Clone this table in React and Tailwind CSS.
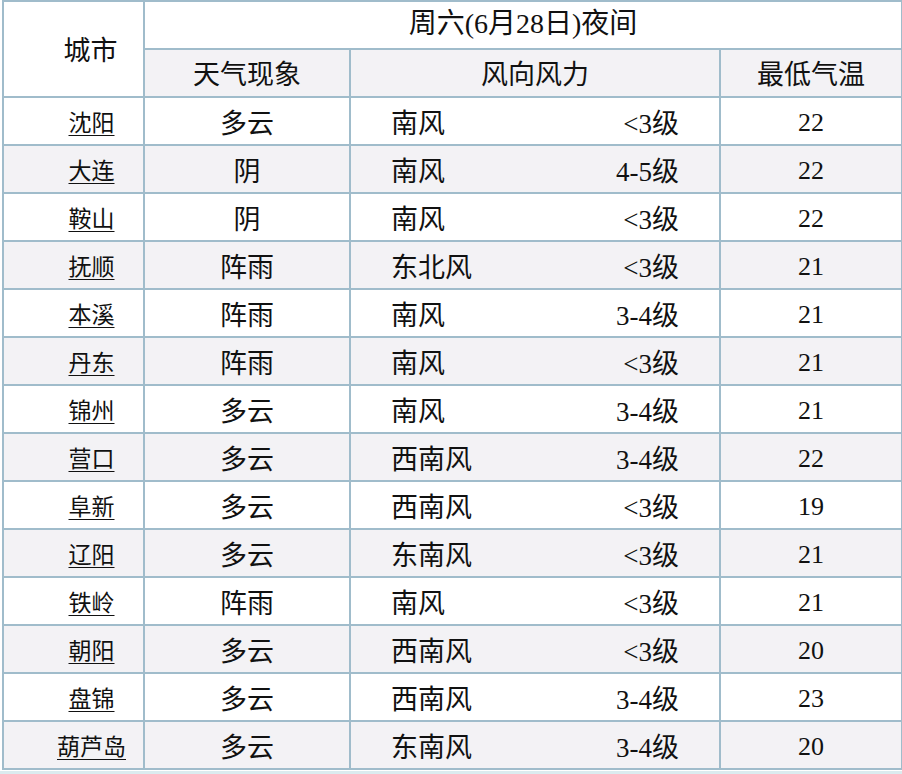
export default function App() {
  const rows = [
    ["沈阳", "多云", "南风", "<3级", "22"],
    ["大连", "阴", "南风", "4-5级", "22"],
    ["鞍山", "阴", "南风", "<3级", "22"],
    ["抚顺", "阵雨", "东北风", "<3级", "21"],
    ["本溪", "阵雨", "南风", "3-4级", "21"],
    ["丹东", "阵雨", "南风", "<3级", "21"],
    ["锦州", "多云", "南风", "3-4级", "21"],
    ["营口", "多云", "西南风", "3-4级", "22"],
    ["阜新", "多云", "西南风", "<3级", "19"],
    ["辽阳", "多云", "东南风", "<3级", "21"],
    ["铁岭", "阵雨", "南风", "<3级", "21"],
    ["朝阳", "多云", "西南风", "<3级", "20"],
    ["盘锦", "多云", "西南风", "3-4级", "23"],
    ["葫芦岛", "多云", "东南风", "3-4级", "20"],
  ];
  const font = { fontFamily: '"Liberation Serif", "Noto Sans CJK SC", serif' };
  const bd = "border-2 border-[#a0bccb]";
  return (
    <div className="w-[902px] h-[774px] bg-white text-[#111]" style={font}>
      <table className="table-fixed border-collapse ml-[2px] w-[899px] text-[27px] leading-none">
        <colgroup>
          <col className="w-[141px]" />
          <col className="w-[206px]" />
          <col className="w-[370px]" />
          <col className="w-[182px]" />
        </colgroup>
        <thead>
          <tr className="h-[48px]">
            <th rowSpan={2} className={`${bd} bg-white font-normal text-center pl-[34px] pt-[4px]`}>
              城市
            </th>
            <th colSpan={3} className={`${bd} bg-white font-normal text-center text-[28px] pb-[2px]`}>
              周六(6月28日)夜间
            </th>
          </tr>
          <tr className="h-[48px]">
            <th className={`${bd} bg-[#f3f2f5] font-normal text-center pt-[4px]`}>天气现象</th>
            <th className={`${bd} bg-[#f3f2f5] font-normal text-center pt-[4px]`}>风向风力</th>
            <th className={`${bd} bg-[#f3f2f5] font-normal text-center pt-[4px]`}>最低气温</th>
          </tr>
        </thead>
        <tbody>
          {rows.map((r, i) => (
            <tr key={i} className={`h-[48px] ${i % 2 === 1 ? "bg-[#f3f2f5]" : "bg-white"}`}>
              <td className={`${bd} text-center pl-[36px] pt-[4px] text-[23px]`}>
                <span className="underline underline-offset-[4px] decoration-1">{r[0]}</span>
              </td>
              <td className={`${bd} text-center pt-[6px]`}>{r[1]}</td>
              <td className={`${bd} pt-[6px] px-[40px]`}>
                <div className="flex justify-between">
                  <span>{r[2]}</span>
                  <span>{r[3]}</span>
                </div>
              </td>
              <td className={`${bd} text-center pt-[4px] text-[26px]`}>{r[4]}</td>
            </tr>
          ))}
        </tbody>
      </table>
      <div className="h-[5px] bg-[#dcebef] mt-[1px]" />
    </div>
  );
}
